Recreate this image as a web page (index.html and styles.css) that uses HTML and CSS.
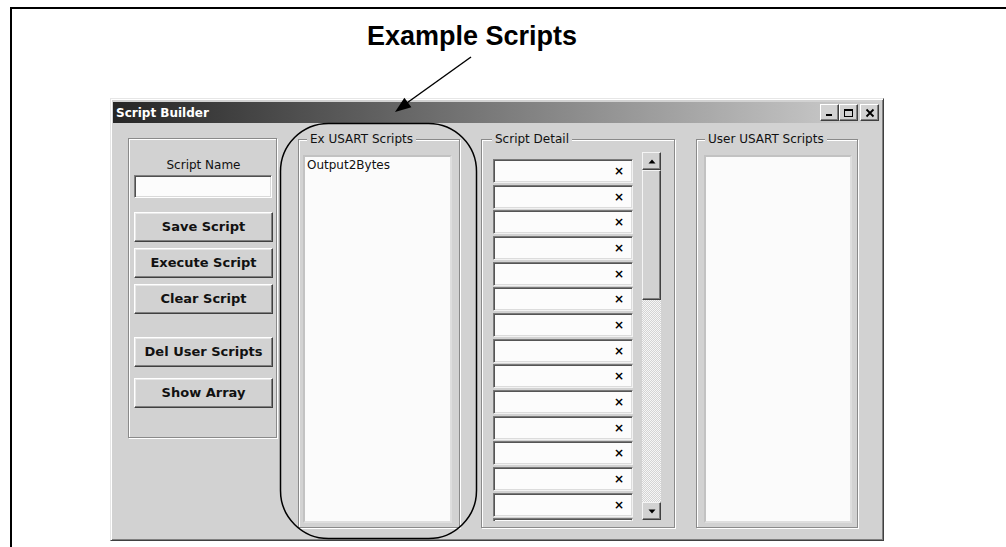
FILE: index.html
```html
<!doctype html>
<html>
	<head>
		<title>Script Builder</title>
		<link rel="stylesheet" href="styles.css">
	</head>
	<body>
		<div class="sheet">
			<h1 class="caption">Example Scripts</h1>

			<div class="window">
				<div class="titlebar">
					<span class="title">Script Builder</span>
					<div class="cbtns">
						<span class="cbtn"><svg width="9" height="9" viewBox="0 0 9 9"><rect x="1" y="6" width="6" height="2" fill="#000"/></svg></span>
						<span class="cbtn"><svg width="11" height="10" viewBox="0 0 11 10"><rect x="1.5" y="1.5" width="8" height="7" fill="none" stroke="#000"/><rect x="1" y="1" width="9" height="2" fill="#000"/></svg></span>
						<span class="cbtn close"><svg width="10" height="10" viewBox="0 0 10 10"><path d="M1.5 1.5 L8.5 8.5 M8.5 1.5 L1.5 8.5" stroke="#000" stroke-width="1.8"/></svg></span>
					</div>
				</div>

				<div class="client">
					<div class="group tools">
						<div class="label">Script Name</div>
						<div class="field"></div>
						<div class="btn save">Save Script</div>
						<div class="btn">Execute Script</div>
						<div class="btn">Clear Script</div>
						<div class="btn del">Del User Scripts</div>
						<div class="btn show">Show Array</div>
					</div>

					<div class="group ex">
						<span class="legend">Ex USART Scripts</span>
						<div class="listbox">
							<div class="item">Output2Bytes</div>
						</div>
					</div>

					<div class="group detail">
						<span class="legend">Script Detail</span>
						<div class="detail-body">
							<div class="rows">
								<div class="row">&times;</div>
								<div class="row">&times;</div>
								<div class="row">&times;</div>
								<div class="row">&times;</div>
								<div class="row">&times;</div>
								<div class="row">&times;</div>
								<div class="row">&times;</div>
								<div class="row">&times;</div>
								<div class="row">&times;</div>
								<div class="row">&times;</div>
								<div class="row">&times;</div>
								<div class="row">&times;</div>
								<div class="row">&times;</div>
								<div class="row">&times;</div>
								<div class="row"></div>
							</div>
							<div class="vscroll">
								<div class="sbtn"><svg width="8" height="5" viewBox="0 0 8 5"><polygon points="4,0.5 7.5,4.5 0.5,4.5" fill="#000"/></svg></div>
								<div class="thumb"></div>
								<div class="track"></div>
								<div class="sbtn"><svg width="8" height="5" viewBox="0 0 8 5"><polygon points="0.5,0.5 7.5,0.5 4,4.5" fill="#000"/></svg></div>
							</div>
						</div>
					</div>

					<div class="group user">
						<span class="legend">User USART Scripts</span>
						<div class="listbox"></div>
					</div>
				</div>
			</div>
		</div>

		<!-- callout drawn over the screenshot -->
		<svg class="notes" width="1006" height="547" viewBox="0 0 1006 547">
			<line x1="471" y1="57" x2="404" y2="105" stroke="#000" stroke-width="1.5"/>
			<polygon points="395,112 411.4,107.3 404.4,97.7" fill="#000"/>
			<rect x="280.5" y="123.5" width="196" height="415" rx="48" ry="48" fill="none" stroke="#000" stroke-width="1.5"/>
		</svg>
	</body>
</html>
```

FILE: styles.css
```css
body {
	margin: 0;
	height: 547px;
	overflow: hidden;
	position: relative;
	background: #fff;
	font-family: "DejaVu Sans", sans-serif;
	color: #111;
}
.sheet {
	margin: 7px 0 0 10px;
	height: 538px;
	border-top: 2px solid #000;
	border-left: 2px solid #000;
}
.caption {
	margin: 12px 0 0;
	padding-left: 355px;
	font: bold 27px/30px "Liberation Sans", Arial, sans-serif;
	color: #000;
}

/* window frame */
.window {
	margin: 47px 0 0 98px;
	width: 774px;
	height: 443px;
	box-sizing: border-box;
	padding: 3px 2px 2px;
	display: flex;
	flex-direction: column;
	background: #d2d2d2;
	border: 1px solid;
	border-color: #e6e6e6 #404040 #404040 #e6e6e6;
	box-shadow: inset 1px 1px #fff, inset -1px -1px #808080;
}
.titlebar {
	height: 21px;
	flex: none;
	display: flex;
	align-items: center;
	justify-content: space-between;
	padding: 0 2px 0 3px;
	background: linear-gradient(to right, #262626, #d0d0d0);
}
.title {
	color: #fff;
	font: bold 12px/14px "DejaVu Sans", sans-serif;
}
.cbtns {
	display: flex;
}
.cbtn {
	width: 19px;
	height: 17px;
	box-sizing: border-box;
	display: flex;
	align-items: center;
	justify-content: center;
	background: #d2d2d2;
	border: 1px solid;
	border-color: #fff #404040 #404040 #fff;
	box-shadow: inset -1px -1px #808080;
}
.cbtn.close {
	margin-left: 2px;
}

.client {
	flex: 1;
	display: flex;
	align-items: flex-start;
	gap: 21px;
	padding: 15px 0 0 15px;
}

/* etched group boxes */
.group {
	box-sizing: border-box;
	display: flex;
	flex-direction: column;
	border: 1px solid #8a8a8a;
	box-shadow: inset 1px 1px #fff, 1px 1px #fff;
}
.legend {
	align-self: flex-start;
	margin-top: -8px;
	padding: 0 3px;
	background: #d2d2d2;
	font-size: 12px;
	line-height: 14px;
}

.tools {
	width: 149px;
	height: 300px;
	padding: 19px 0 0 5px;
}
.label {
	width: 139px;
	text-align: center;
	font-size: 12px;
	line-height: 14px;
}
.field {
	width: 138px;
	height: 23px;
	margin-top: 3px;
	box-sizing: border-box;
	background: #fcfcfc;
	border: 1px solid;
	border-color: #808080 #fff #fff #808080;
	box-shadow: inset 1px 1px #505050, inset -1px -1px #dadada;
}
.btn {
	width: 139px;
	height: 30px;
	margin-top: 6px;
	box-sizing: border-box;
	text-align: center;
	font: bold 13px/28px "DejaVu Sans", sans-serif;
	background: #d2d2d2;
	border: 1px solid;
	border-color: #fff #404040 #404040 #fff;
	box-shadow: inset -1px -1px #808080, inset 1px 1px #e8e8e8;
}
.btn.save {
	margin-top: 14px;
}
.btn.del {
	margin-top: 23px;
}
.btn.show {
	margin-top: 11px;
}

.ex {
	width: 162px;
	height: 389px;
	margin-top: 1px;
	padding: 0 7px 4px 4px;
}
.ex .legend {
	margin-left: 4px;
}
.user {
	width: 162px;
	height: 389px;
	margin-top: 1px;
	padding: 0 5px 4px 7px;
}
.user .legend {
	margin-left: 1px;
}
.listbox {
	flex: 1;
	margin-top: 9px;
	background: #fbfbfb;
	border: 2px solid;
	border-color: #c2c2c2 #dedede #dedede #c2c2c2;
}
.item {
	padding: 1px 0 0 2px;
	font-size: 12px;
	line-height: 14px;
}

/* script detail grid */
.detail {
	width: 194px;
	height: 389px;
	margin-top: 1px;
	padding: 0 13px 0 11px;
}
.detail .legend {
	margin-left: -1px;
}
.detail-body {
	display: flex;
	align-items: flex-start;
	gap: 9px;
}
.rows {
	width: 140px;
	height: 362px;
	margin-top: 13px;
	overflow: hidden;
	display: flex;
	flex-direction: column;
	gap: 1.67px;
}
.row {
	flex: none;
	height: 24px;
	box-sizing: border-box;
	display: flex;
	align-items: center;
	justify-content: flex-end;
	padding-right: 8px;
	font: bold 12px/14px "DejaVu Sans", sans-serif;
	color: #000;
	background: #fcfcfc;
	border: 1px solid;
	border-color: #7a7a7a #f2f2f2 #f2f2f2 #7a7a7a;
	box-shadow: inset 1px 1px #555, inset -1px -1px #dcdcdc;
}
.vscroll {
	width: 19px;
	height: 368px;
	margin-top: 6px;
	display: flex;
	flex-direction: column;
}
.sbtn,
.thumb {
	flex: none;
	box-sizing: border-box;
	background: #d2d2d2;
	border: 1px solid;
	border-color: #f4f4f4 #404040 #404040 #f4f4f4;
	box-shadow: inset -1px -1px #808080;
}
.sbtn {
	height: 18px;
	display: flex;
	align-items: center;
	justify-content: center;
}
.thumb {
	height: 130px;
}
.track {
	flex: 1;
	background: repeating-conic-gradient(#d4d4d4 0 25%, #f6f6f6 0 50%) 0 0 / 2px 2px;
}

.notes {
	position: absolute;
	left: 0;
	top: 0;
	pointer-events: none;
}
```
